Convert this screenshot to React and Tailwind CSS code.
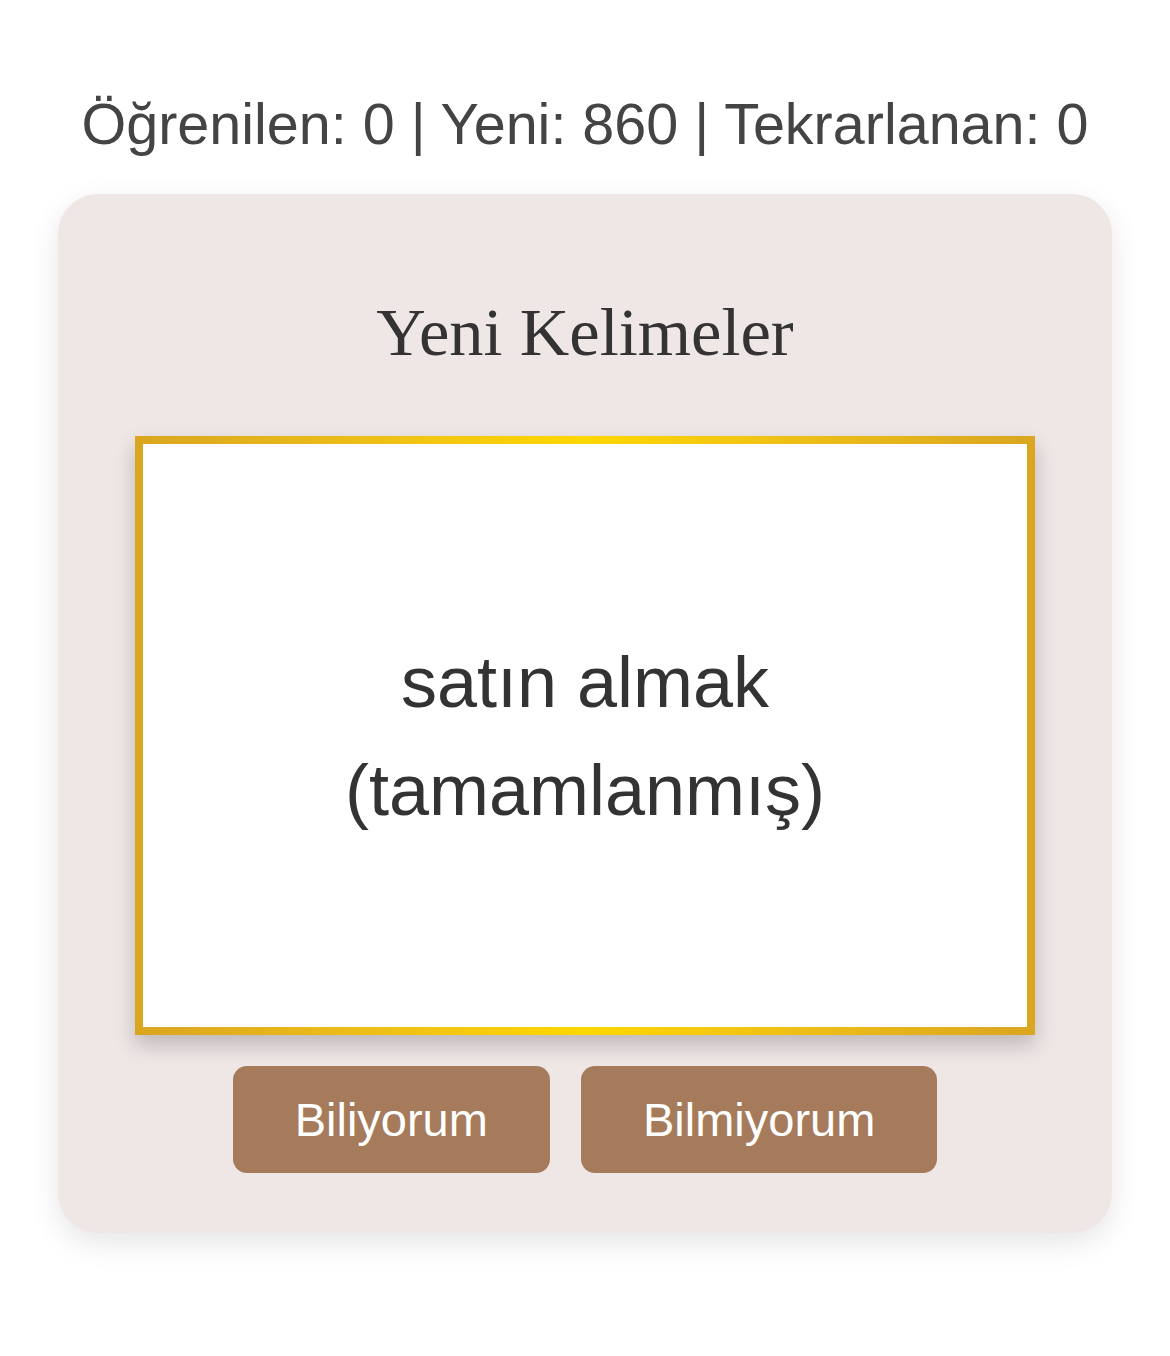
import React, { useState } from "react";

const words = [
  { front: "satın almak (tamamlanmış)", back: "to buy (perfective)" },
];

const App = () => {
  const [stats, setStats] = useState({ learned: 0, fresh: 860, repeated: 0 });
  const [index, setIndex] = useState(0);
  const [flipped, setFlipped] = useState(false);

  const word = words[index % words.length];

  const handleKnow = () => {
    setStats((s) => ({ ...s, learned: s.learned + 1, fresh: s.fresh - 1 }));
    setFlipped(false);
    setIndex((i) => i + 1);
  };

  const handleDontKnow = () => {
    setStats((s) => ({ ...s, repeated: s.repeated + 1 }));
    setFlipped(false);
    setIndex((i) => i + 1);
  };

  return (
    <div className="min-h-[1356px] bg-white flex flex-col items-center pt-[92px] font-['Liberation_Sans',Arial,sans-serif]">
      <p className="text-[57.5px] leading-[1.117] text-[#444444]">
        Öğrenilen: {stats.learned} | Yeni: {stats.fresh} | Tekrarlanan: {stats.repeated}
      </p>

      <div className="mt-[38px] w-[1054px] rounded-[40px] bg-[#efe6e6] shadow-[0_10px_30px_rgba(0,0,0,0.1)] flex flex-col items-center pt-[98px] pb-[60px]">
        <h2 className="font-['Liberation_Serif','Times_New_Roman',serif] text-[68.5px] leading-[80px] text-[#333333]">
          Yeni Kelimeler
        </h2>

        <div
          onClick={() => setFlipped(!flipped)}
          className="mt-[64px] w-[900px] h-[599px] p-2 bg-linear-to-r from-[#daa520] via-[#ffd700] to-[#daa520] shadow-[0_10px_20px_rgba(0,0,0,0.2)] cursor-pointer"
        >
          <div className="w-full h-full bg-white flex items-center justify-center px-12 text-center">
            <span className="text-[72px] leading-[108px] text-[#333333]">
              {flipped ? word.back : word.front}
            </span>
          </div>
        </div>

        <div className="mt-[31px] flex gap-[31px]">
          <button
            onClick={handleKnow}
            className="bg-[#a67b5b] text-white text-[47px] leading-[55px] px-[62px] py-[26px] rounded-[14px]"
          >
            Biliyorum
          </button>
          <button
            onClick={handleDontKnow}
            className="bg-[#a67b5b] text-white text-[47px] leading-[55px] px-[62px] py-[26px] rounded-[14px]"
          >
            Bilmiyorum
          </button>
        </div>
      </div>
    </div>
  );
};

export default App;
